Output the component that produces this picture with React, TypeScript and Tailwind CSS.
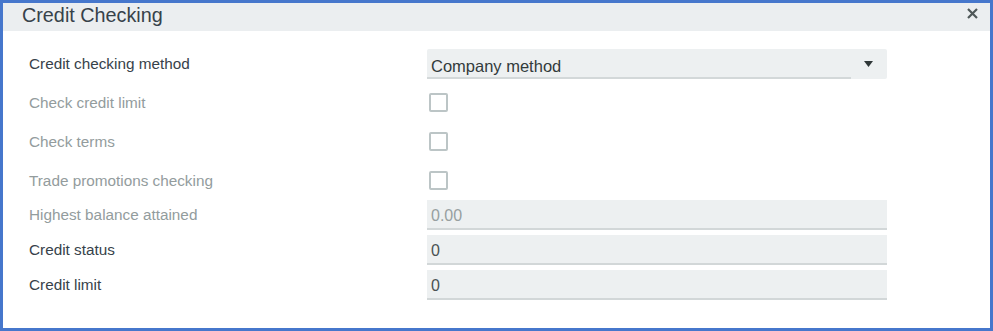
import { ReactNode } from 'react';

const font = { fontFamily: '"Liberation Sans", Arial, sans-serif' };

function Label({ children, disabled }: { children: ReactNode; disabled?: boolean }) {
  return (
    <div className={`w-[424px] shrink-0 pl-[26px] text-[15.3px] leading-none ${disabled ? 'text-[#939c9d]' : 'text-[#37424a]'}`}>
      {children}
    </div>
  );
}

function Checkbox() {
  return <div className="ml-[2px] w-[19px] h-[19px] rounded-[2px] border-2 border-[#bcc5c6] bg-white" />;
}

function TextField({ value, muted }: { value: string; muted?: boolean }) {
  return (
    <div className={`w-[460px] h-[30px] flex items-center pl-[4px] pt-[3px] bg-[#edf0f1] border-b-2 border-[#d2d7d8] text-[16px] ${muted ? 'text-[#979fa0]' : 'text-[#4a5253]'}`}>
      {value}
    </div>
  );
}

export default function App() {
  return (
    <div style={font} className="w-[993px] h-[331px] border-[3px] border-[#4677cc] bg-white flex flex-col">
      {/* header */}
      <div className="h-[28px] shrink-0 bg-[#ebeef0] flex items-center justify-between pl-[19px] pr-[12px]">
        <span className="text-[19.8px] text-[#37424a] leading-none mb-[3px]">Credit Checking</span>
        <svg width="11" height="11" viewBox="0 0 11 11" className="mb-[7px]">
          <path d="M1 1 L10 10 M10 1 L1 10" stroke="#4f5859" strokeWidth="2.2" />
        </svg>
      </div>

      <div className="flex flex-col pt-[18px]">
        <div className="flex items-center h-[30px]">
          <Label>Credit checking method</Label>
          <div className="w-[460px] h-[30px] flex bg-[#edf0f1] rounded-[2px]">
            <div className="w-[424px] flex items-center pl-[4px] pt-[7px] border-b-2 border-[#d3d8d9] text-[16.5px] text-[#333b3c]">
              Company method
            </div>
            <div className="flex-1 flex items-center justify-center pr-[2px]">
              <svg width="9" height="6" viewBox="0 0 9 6">
                <path d="M0 0 H9 L4.5 6 Z" fill="#2f3738" />
              </svg>
            </div>
          </div>
        </div>

        <div className="h-[4px]" />
        <div className="flex items-center h-[39px]">
          <Label disabled>Check credit limit</Label>
          <Checkbox />
        </div>
        <div className="flex items-center h-[39px]">
          <Label disabled>Check terms</Label>
          <Checkbox />
        </div>
        <div className="flex items-center h-[39px]">
          <Label disabled>Trade promotions checking</Label>
          <Checkbox />
        </div>

        <div className="flex flex-col gap-[5px]">
          <div className="flex items-center">
            <Label disabled>Highest balance attained</Label>
            <TextField value="0.00" muted />
          </div>
          <div className="flex items-center">
            <Label>Credit status</Label>
            <TextField value="0" />
          </div>
          <div className="flex items-center">
            <Label>Credit limit</Label>
            <TextField value="0" />
          </div>
        </div>
      </div>
    </div>
  );
}
